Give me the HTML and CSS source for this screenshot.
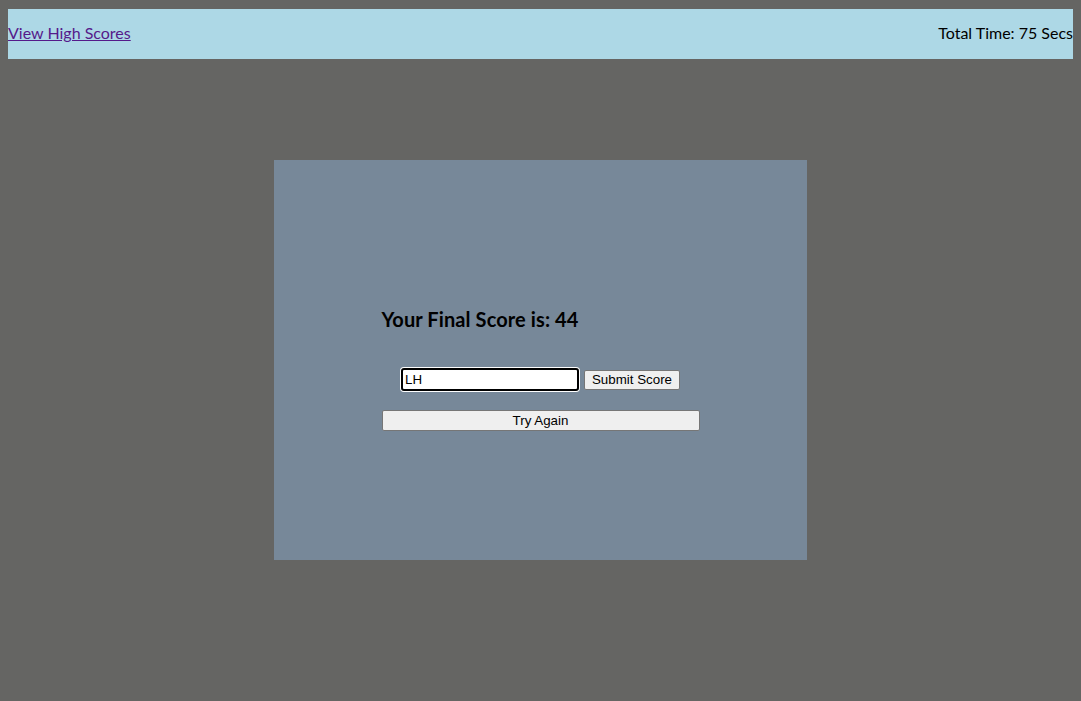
FILE: index.html
```html
<!DOCTYPE html>
<html>
<head>
<meta charset="utf-8">
<link rel="stylesheet" href="styles.css">
</head>
<body>
<header class="topbar">
  <a class="scores-link" href="#">View High Scores</a>
  <span class="timer">Total Time: 75 Secs</span>
</header>
<main class="card">
  <div class="content">
    <h2 class="final">Your Final Score is: 44</h2>
    <div class="entry">
      <input class="initials" type="text" value="LH" autofocus>
      <button class="btn">Submit Score</button>
    </div>
    <button class="btn wide">Try Again</button>
  </div>
</main>
</body>
</html>
```
FILE: styles.css
```css
html, body {
  background: #656563;
}
body {
  margin: 9px 8px 8px;
  font-family: "Lato", "DejaVu Sans", sans-serif;
  font-size: 16px;
  color: #000;
}
.topbar {
  height: 50px;
  box-sizing: border-box;
  padding-bottom: 3px;
  background: #add8e6;
  display: flex;
  align-items: center;
  justify-content: space-between;
}
.scores-link {
  color: #551a8b;
  text-decoration: underline;
}
.card {
  width: 533px;
  height: 400px;
  margin: 101px auto 0;
  background: #778899;
  display: flex;
  justify-content: center;
  box-sizing: border-box;
  padding-top: 147px;
}
.content {
  width: 318px;
  display: flex;
  flex-direction: column;
}
.final {
  margin: 0;
  font-size: 20px;
  letter-spacing: 0.1px;
  font-weight: bold;
  line-height: 24px;
}
.entry {
  margin-top: 37px;
  display: flex;
  justify-content: center;
  align-items: center;
  gap: 5px;
}
.initials {
  width: 170px;
  height: 17px;
  padding: 1px 2px;
  border: 2px solid #000;
  border-radius: 3px;
  outline: none;
  box-shadow: 0 0 0 1px #fff;
  font-family: "Liberation Sans", Arial, sans-serif;
  font-size: 13.33px;
  background: #fff;
}
.btn {
  font-family: "Liberation Sans", Arial, sans-serif;
  font-size: 13.33px;
  background: #efefef;
  border: 1px solid #767676;
  border-radius: 2px;
  color: #000;
  height: 20px;
  padding: 0 7px;
}
.btn.wide {
  margin-top: 19px;
  width: 318px;
  height: 21px;
}
```
